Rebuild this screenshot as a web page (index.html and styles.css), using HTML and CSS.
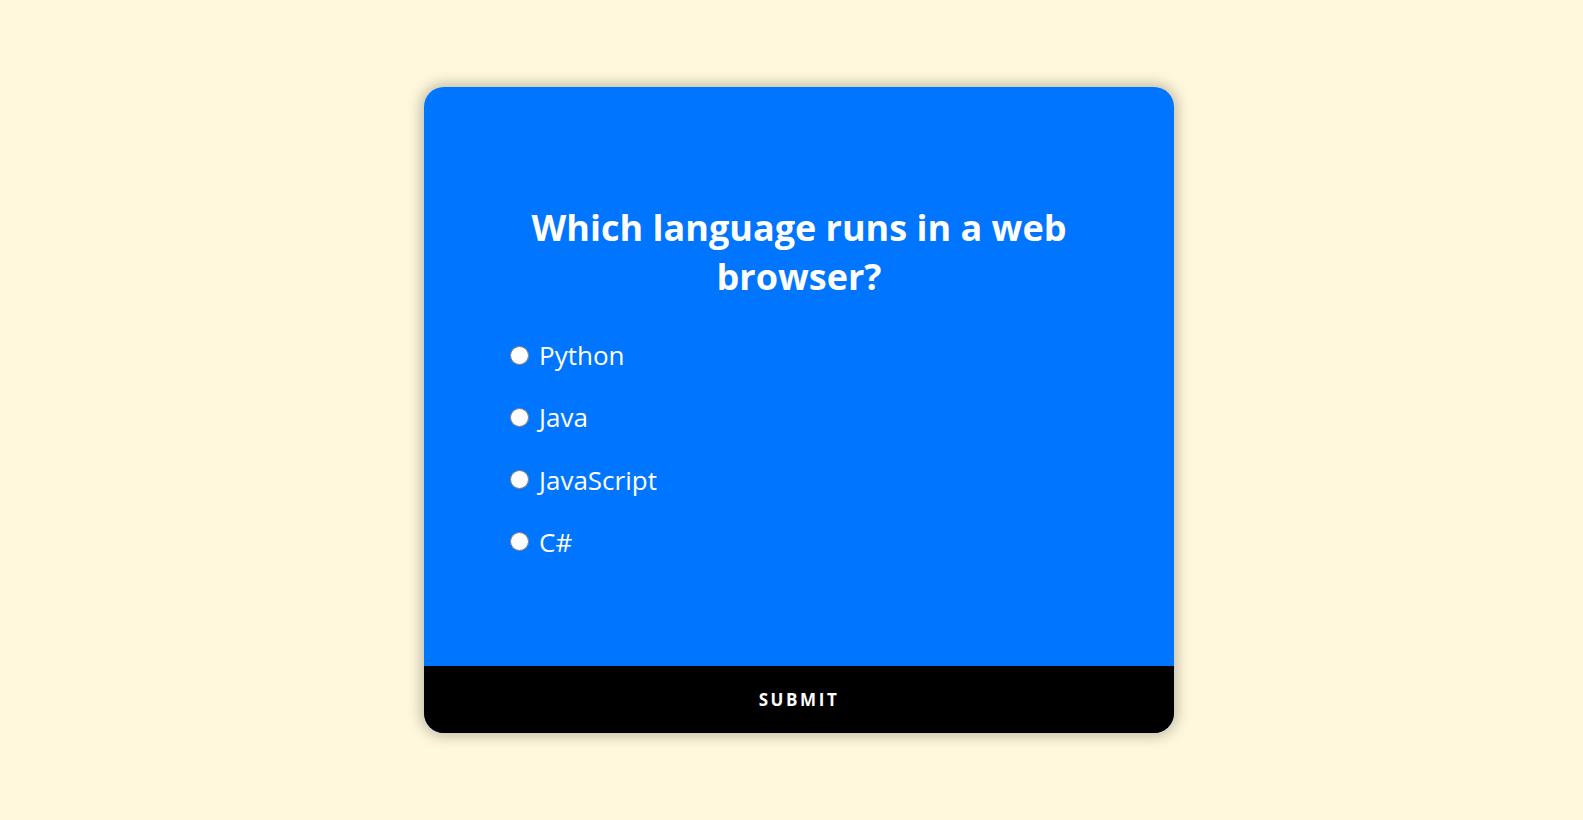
FILE: index.html
```html
<!DOCTYPE html>
<html lang="en">
<head>
<meta charset="utf-8">
<title>Quiz</title>
<link rel="stylesheet" href="styles.css">
</head>
<body>
<div class="page">
  <div class="quiz">
    <div class="quiz-body">
      <h2 class="question">Which language runs in a web browser?</h2>
      <ul class="answers">
        <li class="answer"><input type="radio" name="answer" id="a" class="radio"><label for="a">Python</label></li>
        <li class="answer"><input type="radio" name="answer" id="b" class="radio"><label for="b">Java</label></li>
        <li class="answer"><input type="radio" name="answer" id="c" class="radio"><label for="c">JavaScript</label></li>
        <li class="answer"><input type="radio" name="answer" id="d" class="radio"><label for="d">C#</label></li>
      </ul>
    </div>
    <button class="submit">Submit</button>
  </div>
</div>
</body>
</html>
```
FILE: styles.css
```css
html, body {
  margin: 0;
  padding: 0;
}
body {
  background: #fff8dc;
  font-family: "Open Sans", "Noto Sans", sans-serif;
}
.page {
  height: 820px;
  display: flex;
  align-items: center;
  justify-content: center;
  padding-left: 15px;
  box-sizing: border-box;
}
.quiz {
  width: 750px;
  background: #0075ff;
  border-radius: 20px;
  overflow: hidden;
  box-shadow: 0 0 14px 3px rgba(0, 0, 0, 0.25);
}
.quiz-body {
  padding: 115.5px 86px 106px 86px;
}
.question {
  margin: 0;
  color: #fff;
  font-size: 36px;
  font-weight: 700;
  text-align: center;
  line-height: normal;
}
.answers {
  list-style: none;
  margin: 36.5px 0 0;
  padding: 0;
  display: flex;
  flex-direction: column;
  gap: 26.3px;
}
.answer {
  display: flex;
  align-items: center;
  gap: 10px;
  color: #fff;
  font-size: 26px;
  line-height: normal;
}
.radio {
  width: 19px;
  height: 19px;
  margin: 0;
}
.submit {
  display: block;
  width: 100%;
  height: 67px;
  border: none;
  background: #000;
  color: #fff;
  font-family: "Open Sans", "Noto Sans", sans-serif;
  font-size: 17px;
  font-weight: 700;
  letter-spacing: 2.6px;
  text-transform: uppercase;
  padding: 0;
  cursor: pointer;
}
```
